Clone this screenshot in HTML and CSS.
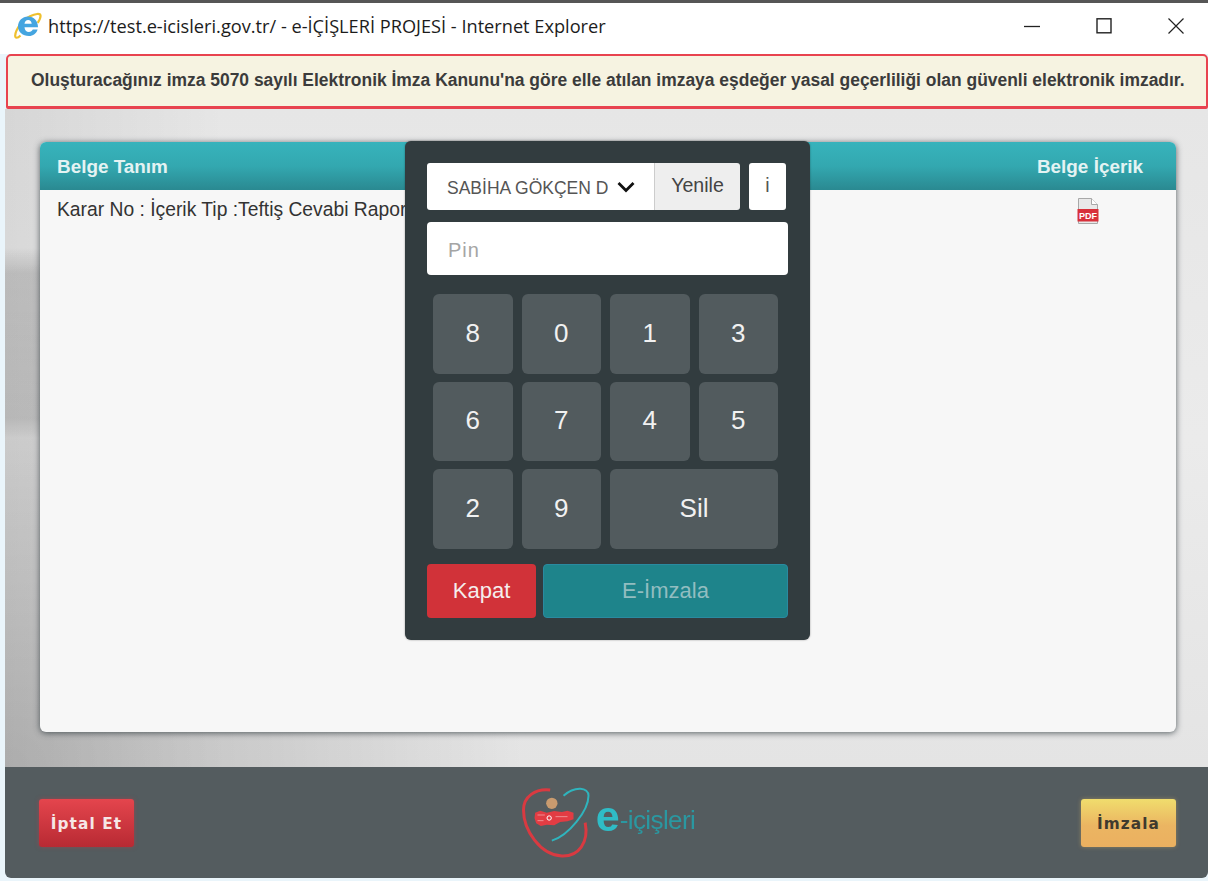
FILE: index.html
```html
<!DOCTYPE html>
<html lang="tr">
<head>
<meta charset="utf-8">
<title>e-İÇİŞLERİ PROJESİ</title>
<link rel="stylesheet" href="styles.css">
</head>
<body>
<div class="window">
  <header class="titlebar">
    <svg class="ie-icon" viewBox="0 0 28 28" width="28" height="28" aria-hidden="true">
      <path d="M6.500 23.500C3.500 26.500 1 26.500 1.200 23.500 1.500 18 8 8 16 4.200c5.500-2.600 10-3 10.500-.8.300 1.700-.8 4.500-2.800 7.500" fill="none" stroke="#efc02f" stroke-width="2.200"/>
      <path d="M4 14.500C4 8.800 8.500 4.500 14 4.500c6 0 10 4.300 10 10.700H10.500c.2 3 1.900 4.700 4.400 4.700 1.900 0 3.100-.9 3.900-2.400h4.800c-1.200 4-4.500 6.500-8.700 6.500C8.800 24 4 19.900 4 14.500zm6.500-2.800h7.200c-.2-2.300-1.600-3.700-3.600-3.700s-3.300 1.400-3.600 3.700z" fill="#45a5e0" fill-rule="evenodd"/>
    </svg>
    <span class="page-title">https://test.e-icisleri.gov.tr/ - e-İÇİŞLERİ PROJESİ - Internet Explorer</span>
    <div class="window-controls">
      <svg viewBox="0 0 16 16" width="16" height="16" aria-hidden="true"><path d="M0 8.500h16" stroke="#222" stroke-width="1.300"/></svg>
      <svg viewBox="0 0 16 16" width="16" height="16" aria-hidden="true"><rect x="1" y=".8" width="14" height="14" fill="none" stroke="#222" stroke-width="1.400"/></svg>
      <svg viewBox="0 0 16 16" width="16" height="16" aria-hidden="true"><path d="M.5.500l15 15M15.500.500l-15 15" stroke="#222" stroke-width="1.200"/></svg>
    </div>
  </header>

  <main class="frame">
    <div class="notice">Oluşturacağınız imza 5070 sayılı Elektronik İmza Kanunu'na göre elle atılan imzaya eşdeğer yasal geçerliliği olan güvenli elektronik imzadır.</div>

    <section class="stage">
      <div class="panel">
        <div class="panel-head">
          <span>Belge Tanım</span>
          <span>Belge İçerik</span>
        </div>
        <div class="panel-row">
          <span>Karar No : İçerik Tip :Teftiş Cevabi Rapor</span>
          <svg class="pdf-icon" viewBox="0 0 22 26" width="22" height="26" aria-hidden="true">
            <path d="M1.500 .5h13l6 6v19h-19z" fill="#e9e9e9" stroke="#a8a8a8"/>
            <path d="M14.500 .5v6h6" fill="#fff" stroke="#a8a8a8"/>
            <rect x="0.500" y="11" width="21" height="12.500" fill="#d8303a"/>
            <text x="11" y="21" class="pdf-label">PDF</text>
          </svg>
        </div>
      </div>
    </section>

    <footer class="actions">
      <button class="action action-cancel">İptal Et</button>
      <div class="brand">
        <svg class="brand-mark" viewBox="120 75 215 225" width="72" height="75" aria-hidden="true">
          <path d="M210 90C165 85 130 110 130 150c0 60 50 135 115 138 50 2 82-40 70-100" fill="none" stroke="#d93a41" stroke-width="9"/>
          <path d="M215 242c50-15 110-90 110-135 0-25-40-30-75 0" fill="none" stroke="#2fb4bd" stroke-width="6"/>
          <circle cx="215" cy="130" r="17" fill="#c99b6f"/>
          <path d="M165 158L180 152 200 158 222 153 245 156 262 152 280 158 280 178 262 184 240 186 222 196 200 194 182 198 168 190 163 174z" fill="#e23c43"/>
          <circle cx="207" cy="174" r="6.500" fill="none" stroke="#fff" stroke-width="3"/>
          <path d="M172 165h22M172 182h18M226 170h36" stroke="#f4b9bb" stroke-width="2"/>
        </svg>
        <span class="brand-e">e</span><span class="brand-name">-içişleri</span>
      </div>
      <button class="action action-sign">İmzala</button>
    </footer>
  </main>

  <!-- PIN keypad dialog -->
  <div class="keypad-dialog">
    <div class="device-row">
      <div class="device-group">
        <div class="device-select">
          <span class="device-name">SABİHA GÖKÇEN D</span>
          <svg viewBox="0 0 18 12" width="18" height="12" aria-hidden="true"><path d="M1.500 2l7.500 7.500L16.500 2" fill="none" stroke="#111" stroke-width="2.800"/></svg>
        </div>
        <button class="refresh">Yenile</button>
      </div>
      <button class="info">i</button>
    </div>
    <input class="pin" type="password" placeholder="Pin">
    <div class="keys">
      <button class="key">8</button>
      <button class="key">0</button>
      <button class="key">1</button>
      <button class="key">3</button>
      <button class="key">6</button>
      <button class="key">7</button>
      <button class="key">4</button>
      <button class="key">5</button>
      <button class="key">2</button>
      <button class="key">9</button>
      <button class="key key-wide">Sil</button>
    </div>
    <div class="dialog-buttons">
      <button class="close-btn">Kapat</button>
      <button class="sign-btn">E-İmzala</button>
    </div>
  </div>
</div>
</body>
</html>
```

FILE: styles.css
```css
* {
  box-sizing: border-box;
}

html,
body {
  margin: 0;
  height: 100%;
  overflow: hidden;
}

body {
  background: #fff;
  font-family: "Liberation Sans", Arial, sans-serif;
}

button {
  font-family: inherit;
  border: 0;
  padding: 0;
}

.window {
  position: relative;
  width: 1208px;
  height: 881px;
  display: flex;
  flex-direction: column;
  background: #eaf5fb;
  border-top: 3px solid #565656;
}

.titlebar {
  flex: none;
  height: 51px;
  display: flex;
  align-items: center;
  padding: 0 24px 6px 14px;
  background: #fff;
}

.ie-icon {
  flex: none;
  margin-right: 6px;
}

.page-title {
  font-family: "Open Sans", "Noto Sans", sans-serif;
  font-size: 18.200px;
  color: #1c1c1c;
}

.window-controls {
  margin-left: auto;
  display: flex;
  gap: 56px;
}

.frame {
  flex: 1;
  margin-left: 5px;
  margin-bottom: 3px;
  display: flex;
  flex-direction: column;
  min-height: 0;
}

.notice {
  flex: none;
  height: 55px;
  margin-left: 1px;
  display: flex;
  align-items: center;
  padding: 0 0 1px 23px;
  border: 2px solid #e8434f;
  border-bottom-width: 3px;
  border-radius: 5px 5px 2px 2px;
  background: #f6f3e1;
  color: #3b3b3b;
  font-size: 17.450px;
  font-weight: 700;
  white-space: nowrap;
}

/* Grey backdrop: a darker wedge on the left edge, shaded towards the lower left */
.stage {
  flex: 1;
  padding: 33px 32px 35px 35px;
  min-height: 0;
  display: flex;
  background:
    linear-gradient(to bottom, rgba(0, 0, 0, 0) 21%, rgba(0, 0, 0, 0.13) 25%, rgba(0, 0, 0, 0.1) 47%, rgba(0, 0, 0, 0) 50%) 0 0 / 35px 100% no-repeat,
    radial-gradient(ellipse 520px 520px at 0 100%, rgba(0, 0, 0, 0.19), rgba(0, 0, 0, 0.1) 50%, rgba(0, 0, 0, 0) 100%),
    linear-gradient(to right, rgba(0, 0, 0, 0.07), rgba(0, 0, 0, 0) 220px),
    linear-gradient(to bottom, #e6e6e6 0, #ebebeb 50%, #e4e4e4 100%);
}

.panel {
  flex: 1;
  display: flex;
  flex-direction: column;
  border-radius: 6px;
  overflow: hidden;
  background: #f7f7f7;
  box-shadow: 0 1px 6px rgba(50, 60, 65, 0.8);
}

.panel-head {
  flex: none;
  height: 48px;
  display: flex;
  align-items: center;
  justify-content: space-between;
  padding: 2px 33px 0 17px;
  background: linear-gradient(to bottom, #37b3bc 0, #33a8b0 50%, #2a8991 100%);
  color: #e4f3f3;
  font-size: 18.900px;
  font-weight: 700;
}

.panel-row {
  display: flex;
  justify-content: space-between;
  padding: 8px 77px 0 17px;
  color: #333;
  font-size: 19.300px;
  line-height: 24px;
}

.pdf-icon {
  display: block;
}

.pdf-label {
  font-family: "Liberation Sans", Arial, sans-serif;
  font-size: 9px;
  font-weight: 700;
  fill: #fff;
  text-anchor: middle;
}

.actions {
  flex: none;
  height: 111px;
  display: flex;
  align-items: center;
  justify-content: space-between;
  padding: 0 32px 0 34px;
  background: #545c5f;
  border-radius: 0 0 6px 6px;
}

.action {
  width: 95px;
  height: 48px;
  padding-top: 2px;
  border-radius: 3px;
  font-family: "DejaVu Sans", sans-serif;
  font-size: 15.300px;
  font-weight: 700;
  letter-spacing: 1.100px;
}

.action-cancel {
  color: #f6e6e6;
  background: linear-gradient(to bottom, #e4454d, #b82a33);
  box-shadow: 0 0 4px rgba(200, 60, 70, 0.5);
}

.action-sign {
  color: #3f3a2e;
  background: linear-gradient(to bottom, #f0dd6d 0, #ebb562 55%, #ebb060 100%);
  box-shadow: 0 0 4px rgba(235, 190, 100, 0.4);
}

.brand {
  display: flex;
  align-items: center;
  filter: blur(0.6px);
}

.brand-e {
  font-family: "Liberation Sans", Arial, sans-serif;
  font-size: 43px;
  line-height: 38px;
  font-weight: 700;
  color: #2fbcc6;
  margin: -14px 0 0 4px;
}

.brand-name {
  font-family: "Liberation Sans", Arial, sans-serif;
  font-size: 26px;
  letter-spacing: -0.600px;
  color: #2a98a1;
  margin-top: -4px;
}

.keypad-dialog {
  position: absolute;
  left: 405px;
  top: 138px;
  width: 405px;
  height: 499px;
  padding: 22px;
  background: #323c3f;
  border-radius: 6px;
  box-shadow: 0 0 2px rgba(0, 0, 0, 0.4);
}

.device-row {
  display: flex;
  justify-content: space-between;
  width: 359px;
  height: 47px;
}

.device-group {
  width: 313px;
  display: flex;
  border-radius: 3px;
  overflow: hidden;
}

.device-select {
  width: 227px;
  display: flex;
  align-items: center;
  gap: 9px;
  padding: 0 0 0 20px;
  background: #fff;
}

.device-name {
  width: 161px;
  overflow: hidden;
  white-space: nowrap;
  font-size: 17.500px;
  color: #555;
  padding-top: 3px;
}

.refresh {
  flex: 1;
  border-left: 1px solid #ccc;
  background: #eee;
  color: #444;
  font-size: 19.600px;
  padding-bottom: 2px;
}

.info {
  width: 37px;
  border-radius: 3px;
  background: #fff;
  color: #555;
  font-size: 19.600px;
  padding-bottom: 2px;
}

.pin {
  display: block;
  width: 361px;
  height: 53px;
  margin-top: 12px;
  padding: 3px 21px 0;
  border: 0;
  border-radius: 4px;
  outline: 0;
  background: #fff;
  font-family: "Liberation Sans", Arial, sans-serif;
  font-size: 20px;
}

.pin::placeholder {
  color: #a5a5a5;
  opacity: 1;
  letter-spacing: 1px;
}

.keys {
  display: grid;
  grid-template-columns: repeat(4, 1fr);
  grid-auto-rows: 79.500px;
  gap: 8px 9px;
  width: 345px;
  margin: 19px 0 0 6px;
}

.key {
  border-radius: 6px;
  background: #525b5e;
  color: #f1f1f1;
  font-size: 26px;
  padding-bottom: 1px;
}

.key-wide {
  grid-column: span 2;
}

.dialog-buttons {
  display: flex;
  justify-content: space-between;
  width: 361px;
  height: 54px;
  margin-top: 15px;
}

.close-btn {
  width: 109px;
  border-radius: 4px;
  background: #d13239;
  color: #f5eded;
  font-size: 22px;
}

.sign-btn {
  width: 245px;
  border: 1px solid #2a8aa0;
  border-radius: 4px;
  background: #1e848b;
  color: #92bdc0;
  font-size: 22px;
}
```
